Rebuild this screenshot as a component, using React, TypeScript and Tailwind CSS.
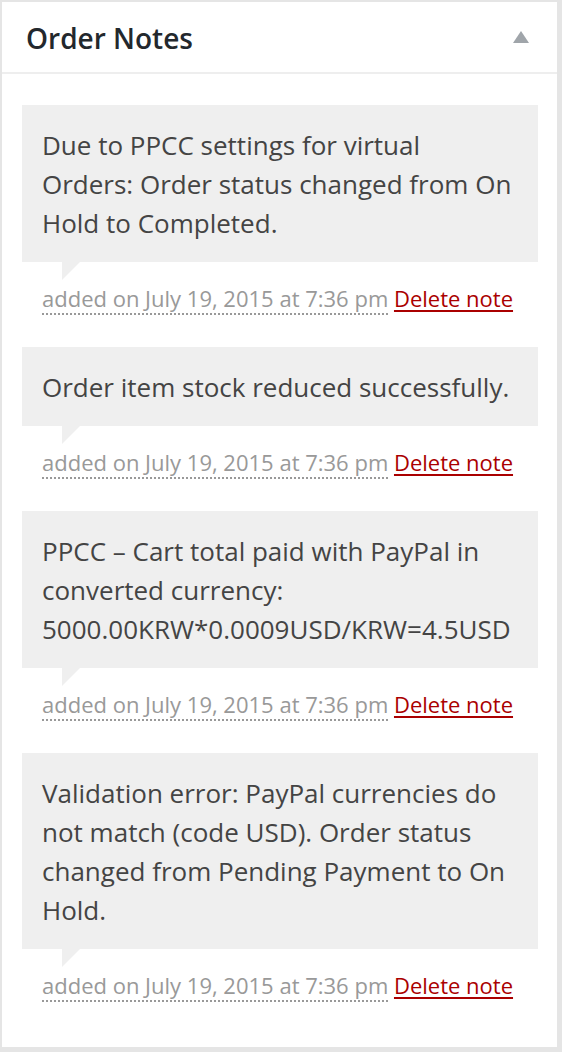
import React from 'react';

const NOTES = [
  'Due to PPCC settings for virtual Orders: Order status changed from On Hold to Completed.',
  'Order item stock reduced successfully.',
  'PPCC \u2013 Cart total paid with PayPal in converted currency: 5000.00KRW*0.0009USD/KRW=4.5USD',
  'Validation error: PayPal currencies do not match (code USD). Order status changed from Pending Payment to On Hold.',
];

const App: React.FC = () => {
  return (
    <div className="w-[562px] h-[1052px] bg-[#e5e5e5] pt-[2px] pl-[2px] pr-[5px] pb-[5px] font-['Open_Sans',sans-serif]">
      <div className="bg-white h-full">
        {/* Header */}
        <div className="h-[72px] flex items-center justify-between pl-[24px] pr-[28px] border-b-2 border-[#eeeeee]">
          <h2 className="text-[28px] font-semibold text-[#23282d] leading-none mt-[2px]">Order Notes</h2>
          <svg width="16" height="12" viewBox="0 0 16 12">
            <path d="M8 0 L16 12 L0 12 Z" fill="#a0a5aa" />
          </svg>
        </div>

        {/* Notes */}
        <ul className="pt-[31px] pl-[20px] pr-[19px]">
          {NOTES.map((note, i) => (
            <li key={i} className="mb-[34px]">
              <div className="relative bg-[#efefef] px-[20px] pt-[21px] pb-[19px] text-[26px] leading-[39px] text-[#444]">
                <p>{note}</p>
                {/* speech tail */}
                <span className="absolute left-[40px] bottom-[-18px] w-0 h-0 border-solid border-t-[18px] border-r-[18px] border-t-[#efefef] border-r-transparent" />
              </div>
              <p className="mt-[21px] pl-[20px] text-[22px] leading-[30px] text-[#999]">
                <span className="border-b-2 border-dotted border-[#999]">added on July 19, 2015 at 7:36 pm</span>{' '}
                <a href="#" className="text-[#a00] underline decoration-2 underline-offset-[3px]">Delete note</a>
              </p>
            </li>
          ))}
        </ul>
      </div>
    </div>
  );
};

export default App;
